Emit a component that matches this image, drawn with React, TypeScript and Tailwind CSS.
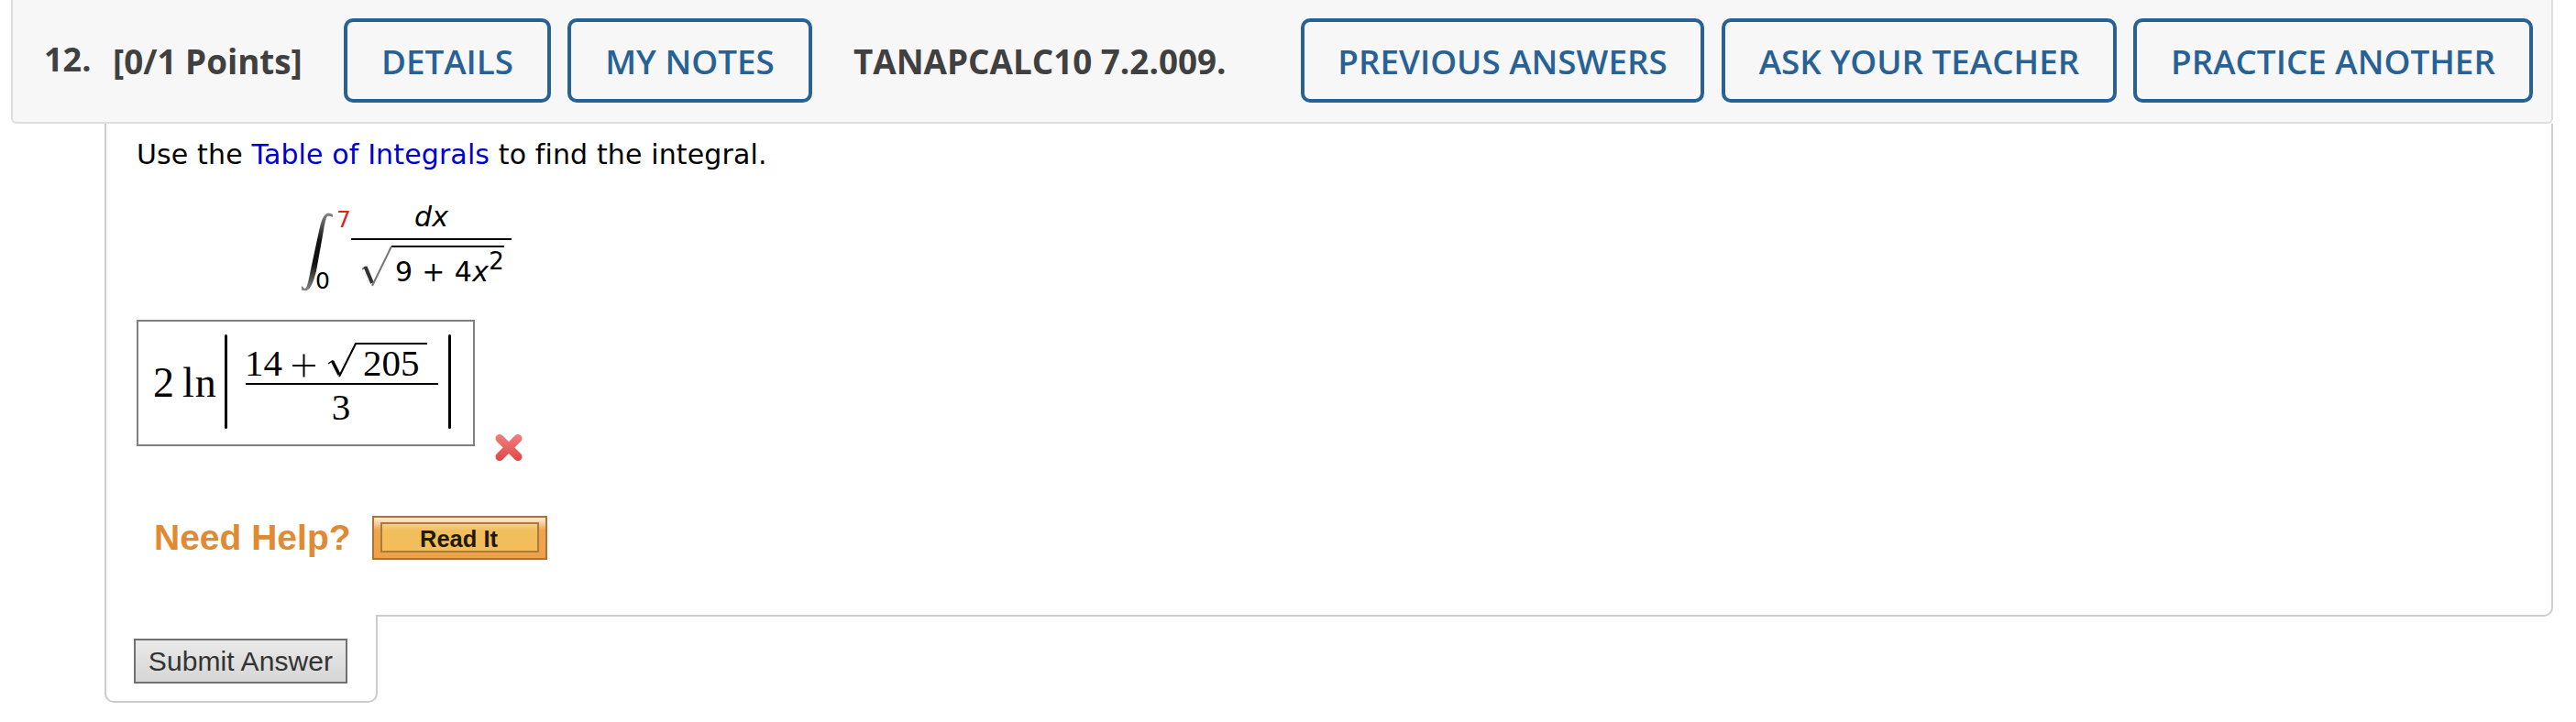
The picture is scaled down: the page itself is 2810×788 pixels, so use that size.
import React from "react";

const HEADER_BUTTON =
  "h-[92px] shrink-0 rounded-[10px] border-4 border-[#286295] text-center font-semibold leading-[86px] text-[#286295] text-[36.8px] whitespace-nowrap";

function Integral() {
  return (
    <svg className="mt-[43px] h-[86px] w-[35px] shrink-0" viewBox="0 0 35 86" fill="none">
      <defs>
        <linearGradient id="stem" x1="0" y1="0" x2="0" y2="1">
          <stop offset="0" stopColor="#888" />
          <stop offset="0.35" stopColor="#111" />
          <stop offset="0.65" stopColor="#111" />
          <stop offset="1" stopColor="#888" />
        </linearGradient>
      </defs>
      <path
        d="M34 2 Q29 -1 26 2 Q22 5 19 20 L10 62 Q7 78 5 82 Q3 84 0 80 L0 84.5 Q7 87.500 11 79 Q14 72 16 64 L23.500 22 Q26 6 28 4 Q31 3 34 5 Z"
        fill="url(#stem)"
      />
    </svg>
  );
}

function Cross() {
  return (
    <svg className="mt-[123px] ml-[21px] h-[32px] w-[33px] shrink-0" viewBox="0 0 33 32">
      <defs>
        <linearGradient id="cross" gradientUnits="userSpaceOnUse" x1="0" y1="0" x2="0" y2="32">
          <stop offset="0" stopColor="#f08484" />
          <stop offset="1" stopColor="#e04444" />
        </linearGradient>
      </defs>
      <path d="M6 6.500 L26 26.500 M26 6.500 L6 26.500" stroke="url(#cross)" strokeWidth="9" strokeLinecap="round" />
    </svg>
  );
}

export default function App() {
  return (
    <div className="h-[788px] w-[2810px] overflow-hidden bg-white pl-3 font-['Open_Sans',sans-serif]">
      <header className="flex h-[135px] w-[2773px] rounded-b-md border-x-2 border-b-2 border-[#dedede] bg-[#f7f7f7] pt-5 text-[36.8px] leading-[94px] font-bold whitespace-nowrap text-[#404040]">
        <span className="-mt-0.5 ml-[34px] w-[75px] shrink-0 text-[36px]">12.</span>
        <span className="w-[252px] shrink-0">[0/1 Points]</span>
        <button className={`${HEADER_BUTTON} w-[226px]`}>DETAILS</button>
        <button className={`${HEADER_BUTTON} ml-[18px] w-[267px]`}>MY NOTES</button>
        <span className="ml-[45px] w-[488px] shrink-0">TANAPCALC10 7.2.009.</span>
        <button className={`${HEADER_BUTTON} w-[440px]`}>PREVIOUS ANSWERS</button>
        <button className={`${HEADER_BUTTON} ml-[19px] w-[431px]`}>ASK YOUR TEACHER</button>
        <button className={`${HEADER_BUTTON} ml-[18px] w-[436px]`}>PRACTICE ANOTHER</button>
      </header>

      <main className="ml-[102px] h-[538px] w-[2671px] rounded-br-[10px] border-r-2 border-b-2 border-l-2 border-[#ccc] pt-[14px] pl-[33px] font-['DejaVu_Sans',sans-serif] text-[30px] text-black">
        <p className="h-10 leading-10 tracking-[0.13px] whitespace-nowrap">
          Use the <a className="text-[#0000cc]">Table of Integrals</a> to find the integral.
        </p>

        <div className="flex h-[160px] pl-[180px]">
          <Integral />
          <div className="-ml-[19px] flex w-[38px] shrink-0 flex-col text-[25px] leading-6">
            <span className="mt-[39px] ml-[22px] text-[#d9261c]">7</span>
            <span className="mt-[43px] -ml-px">0</span>
          </div>
          <div className="flex w-[175px] shrink-0 flex-col">
            <span className="mt-[28px] h-10 text-center leading-10 italic">dx</span>
            <div className="mt-[3px] h-0.5 bg-black" />
            <div className="mt-[6px] ml-[12px] flex">
              <svg className="h-[46px] w-[32px] shrink-0" viewBox="0 0 32 46" fill="none">
                <path d="M0 26 L4 23" stroke="#777" strokeWidth="2" />
                <path d="M3.500 23 L11 41" stroke="#333" strokeWidth="4" />
                <path d="M11 44 L32 1" stroke="#777" strokeWidth="2" />
              </svg>
              <div className="flex w-[123px] border-t-2 border-black pl-[4px] leading-[54px] whitespace-nowrap">
                <span className="tracking-[0.35px]">9 + 4<i>x</i></span>
                <span className="text-[26px] leading-[31px]">2</span>
              </div>
            </div>
          </div>
        </div>

        <div className="flex h-[192px]">
          <div className="flex h-[138px] w-[369px] shrink-0 border-2 border-[#808080] pl-4 font-['Liberation_Serif',serif] whitespace-nowrap">
            <span className="mt-[44px] w-[32px] shrink-0 text-[46px] leading-[46px]">2</span>
            <span className="mt-[44px] w-[46px] shrink-0 text-[46px] leading-[46px] tracking-[1px]">ln</span>
            <span className="mt-[14px] h-[103px] w-[3px] shrink-0 rounded-full bg-black" />
            <div className="ml-[20px] flex w-[210px] shrink-0 flex-col text-[41px] leading-[41px]">
              <div className="mt-[23px] flex h-[44px] items-start">
                <span className="mt-[2px] -ml-px w-[49px] shrink-0">14</span>
                <svg className="mt-[11px] ml-[2px] h-[28px] w-[30px] shrink-0" viewBox="0 0 30 28">
                  <path d="M1 14 H26 M13.500 1.500 V26.500" stroke="#000" strokeWidth="2" />
                </svg>
                <svg className="ml-[9px] h-[40px] w-[33px] shrink-0" viewBox="0 0 33 40" fill="none">
                  <path d="M1 23 L6 19.500" stroke="#000" strokeWidth="1.500" />
                  <path d="M5.500 20 L13 35" stroke="#000" strokeWidth="3.500" />
                  <path d="M13 37 L31 1 H33" stroke="#000" strokeWidth="2" />
                </svg>
                <span className="h-[40px] w-[76px] border-t-2 border-black pl-[6px]">205</span>
              </div>
              <div className="h-0.5 bg-black" />
              <span className="mt-[4px] pr-0.5 text-center">3</span>
            </div>
            <span className="mt-[14px] ml-[11px] h-[103px] w-[3px] shrink-0 rounded-full bg-black" />
          </div>
          <Cross />
        </div>

        <div className="mt-[22px] flex h-[48px] font-['Liberation_Sans',sans-serif]">
          <span className="ml-[19px] w-[238px] shrink-0 text-[39px] leading-[47px] font-bold text-[#e08a33]">Need Help?</span>
          <button className="h-[48px] w-[191px] border-2 border-[#a9733a] bg-linear-to-b from-[#fff0dd] via-[#f0a450] via-30% to-[#f0a04a] px-[7px] pt-[5px] pb-[6px]">
            <span className="block h-[33px] border-2 border-[#a87c3a] bg-linear-to-b from-[#f6cf88] to-[#f2be5c] to-25% pr-0.5 text-center text-[25.500px] leading-[32px] font-bold text-[#221a08]">
              Read It
            </span>
          </button>
        </div>
      </main>

      <footer className="relative -mt-0.5 ml-[102px] h-[96px] w-[298px] rounded-b-[10px] border-r-2 border-b-2 border-l-2 border-[#ccc] bg-white pt-[26px] pl-[30px]">
        <button className="h-[49px] w-[233px] border-2 border-[#717171] bg-linear-to-b from-[#e9e9e9] to-[#d6d6d6] font-['Liberation_Sans',sans-serif] text-[30px] leading-[45px] tracking-[0.1px] whitespace-nowrap text-[#333]">
          Submit Answer
        </button>
      </footer>
    </div>
  );
}
